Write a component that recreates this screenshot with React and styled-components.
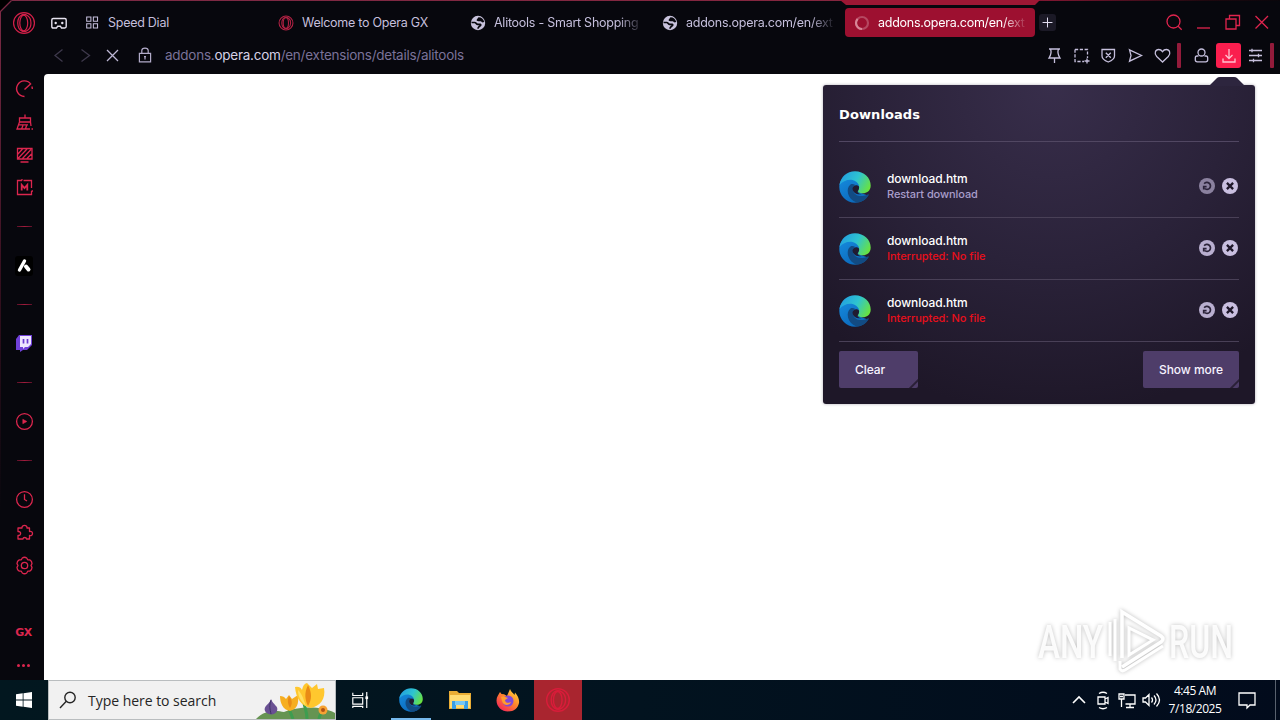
import React from "react";
import styled, { createGlobalStyle } from "styled-components";

const Global = createGlobalStyle`
  *, *::before, *::after { box-sizing: border-box; }
  body { margin: 0; overflow: hidden; background: #fff; }
  button { font: inherit; border: 0; padding: 0; background: none; color: inherit; }
  svg { display: block; flex: none; }
`;

const Desktop = styled.div`
  display: flex;
  flex-direction: column;
  width: 1280px;
  height: 720px;
  font-family: Inter, "Liberation Sans", sans-serif;
`;

const Browser = styled.div`
  position: relative;
  display: flex;
  flex-direction: column;
  height: 680px;
  background: #07070d;
  color: #c5bfdc;
`;

const WindowEdge = styled.svg`
  position: absolute;
  top: 0;
  left: 0;
  pointer-events: none;
`;

const TabBar = styled.div`
  display: flex;
  align-items: center;
  height: 45px;
  padding: 0 8px 0 12px;
`;

const MainMenu = styled.div`
  display: flex;
  align-items: center;
  gap: 15px;
  width: 65px;
`;

const Tab = styled.div`
  display: flex;
  align-items: center;
  gap: 8px;
  width: 192px;
  height: 29px;
  padding: 0 9px;
  color: #c5bfdc;
  ${(p) => p.$active && `
    width: 190px;
    padding-right: 7px;
    background: #9d1030;
    border-radius: 4px;
    color: #fff;
  `}
`;

const TabTitle = styled.span`
  flex: 1;
  overflow: hidden;
  white-space: nowrap;
  font-size: 12.5px;
  line-height: 20px;
  letter-spacing: -.26px;
  ${(p) => p.$fade && `mask-image: linear-gradient(90deg, #000 calc(100% - 26px), transparent);`}
`;

const NewTab = styled.button`
  display: grid;
  place-items: center;
  width: 17px;
  height: 17px;
  margin-left: 4px;
  border-radius: 3px;
  background: #1b1926;
  color: #e4dff3;
`;

const WindowControls = styled.div`
  display: flex;
  align-items: center;
  gap: 9px;
  margin-left: auto;
  padding-bottom: 1px;
  color: #e0244e;
`;

const AddressRow = styled.div`
  display: flex;
  align-items: center;
  height: 29px;
  padding: 0 6px 8px 48px;
`;

const NavGroup = styled.div`
  display: flex;
  gap: 7px;
  padding-bottom: 1px;
  color: #bdb7d4;
`;

const Address = styled.div`
  display: flex;
  align-items: center;
  gap: 12px;
  margin-left: 15px;
  padding-bottom: 2px;
  font-size: 13.5px;
  line-height: 20px;
  letter-spacing: -.25px;
  color: #7a7299;
  b { font-weight: 400; color: #d6d1e6; }
`;

const Tools = styled.div`
  display: flex;
  align-items: center;
  gap: 7px;
  margin-left: auto;
  > svg { margin-bottom: 1px; }
`;

const ToolDivider = styled.i`
  width: 4px;
  height: 25px;
  border-radius: 1px;
  background: #931b3b;
  margin: 0 ${(p) => (p.$last ? "0" : "3px")} 0 -2px;
`;

const DownloadButton = styled.button`
  display: grid;
  place-items: center;
  width: 25px;
  height: 25px;
  margin: 0 -3px 0 -2px;
  border-radius: 3px;
  background: #fa1e4e;
  color: #ffc1cf;
`;

const Content = styled.div`
  display: flex;
  flex: 1;
`;

const Sidebar = styled.nav`
  display: flex;
  flex-direction: column;
  width: 44px;
  padding-left: 4px;
  color: #dc264e;
`;

const SideItem = styled.div`
  display: grid;
  place-items: center;
  height: ${(p) => p.$h}px;
  margin-top: ${(p) => p.$gap || 0}px;
`;

const SideRule = styled.i`
  width: 15px;
  height: 1px;
  background: linear-gradient(90deg, #5d1028, #a01c3c 50%, #5d1028);
`;

const GxLabel = styled.b`
  font: bold 11px "DejaVu Sans", sans-serif;
  letter-spacing: -0.4px;
  padding-right: 1px;
`;

const Page = styled.main`
  position: relative;
  flex: 1;
  background: #fff;
  border-top-left-radius: 4px;
`;

const Popup = styled.section`
  position: absolute;
  top: 11px;
  right: 25px;
  width: 432px;
  height: 319px;
  padding: 0 16px;
  border-radius: 3px;
  background: radial-gradient(ellipse 330px 330px at 53% 0, #382e4b 0, #2a2239 55%, #1e1728 100%);
  box-shadow: 0 0 3px rgba(20, 10, 40, .35);
`;

const PopupNotch = styled.svg`
  position: absolute;
  top: -8px;
  right: 9px;
`;

const PopupTitle = styled.h2`
  height: 57px;
  margin: 0 0 14px;
  border-bottom: 1px solid #514762;
  color: #fff;
  font: bold 13px/59px "DejaVu Sans", sans-serif;
  letter-spacing: 0.1px;
`;

const DownloadRow = styled.div`
  display: flex;
  align-items: center;
  height: 62px;
  border-bottom: 1px solid #494057;
`;

const FileText = styled.div`
  flex: 1;
  margin: -1px 0 0 16px;
`;

const FileName = styled.div`
  color: #fff;
  font-size: 12px;
  font-weight: 500;
  line-height: 16px;
  letter-spacing: -.1px;
`;

const FileStatus = styled.div`
  color: ${(p) => (p.$failed ? "#e80f1b" : "#a99ecb")};
  font-size: 11px;
  font-weight: 500;
  line-height: 15px;
  letter-spacing: ${(p) => (p.$failed ? "-.03px" : "-.08px")};
`;

const RowActions = styled.div`
  display: flex;
  gap: 7px;
  margin: -1px 1px 0 0;
`;

const PopupFooter = styled.div`
  display: flex;
  justify-content: space-between;
  margin-top: 9px;
`;

const PopupButton = styled.button`
  width: ${(p) => p.$w}px;
  height: 37px;
  padding: 0 16px;
  border-radius: 2px;
  background: linear-gradient(135deg, transparent calc(100% - 7px), #2a2037 calc(100% - 6px), #2a2037 calc(100% - 5px), transparent calc(100% - 4px)), #4e3d69;
  color: #f6f3ff;
  font-size: 12px;
  font-weight: 500;
  text-align: left;
  white-space: nowrap;
  letter-spacing: -.05px;
`;

const Watermark = styled.svg`
  position: absolute;
  right: 36px;
  bottom: 2px;
  overflow: visible;
  filter: drop-shadow(0 0 2px rgba(0, 0, 0, .27));
`;

const Taskbar = styled.footer`
  display: flex;
  height: 40px;
  background: linear-gradient(90deg, #02171f, #02131f 50%, #020b1c);
  color: #fff;
  font-family: "Open Sans", "Noto Sans", sans-serif;
`;

const TaskButton = styled.div`
  display: grid;
  place-items: center;
  width: ${(p) => p.$w || 49}px;
  height: 40px;
  background: ${(p) => p.$bg || "transparent"};
  box-shadow: ${(p) => (p.$running ? "inset 0 -2px #76b9ed" : "none")};
  margin: 0 ${(p) => p.$space || 0}px;
`;

const SearchBox = styled.div`
  display: flex;
  align-items: center;
  width: 288px;
  border: 1px solid #b9bdbf;
  background: #f1f1f1;
  color: #252525;
  padding-left: 10px;
  font-size: 14px;
  svg:last-child { margin-left: auto; }
  span { margin-left: 11px; white-space: nowrap; letter-spacing: -.03px; }
`;

const Tray = styled.div`
  display: flex;
  align-items: center;
  margin-left: auto;
  padding-right: 4px;
  gap: 4px;
`;

const Clock = styled.div`
  width: 60px;
  margin-right: -1px;
  text-align: center;
  font-size: 12px;
  line-height: 18px;
  letter-spacing: -.45px;
  white-space: nowrap;
`;

const Notifications = styled.div`
  display: flex;
  align-items: center;
  width: 48px;
  height: 40px;
  padding-left: 9px;
  border-right: 1px solid #59616e;
`;

const Icon = ({ size = 20, w = 1.3, children, ...rest }) => (
  <svg width={size} height={size} viewBox="0 0 20 20" fill="none" stroke="currentColor" strokeWidth={w} {...rest}>
    {children}
  </svg>
);

const OperaIcon = ({ size, w = 1.2, color = "#d32049" }) => (
  <Icon size={size} w={w} stroke={color}>
    <circle cx="10" cy="10" r="8.700" />
    <ellipse cx="9.800" cy="10" rx="3.300" ry="6.600" />
    <path d="M7.500 3.800C10.500 1.500 15.800 4 15.800 10S10.500 18.500 7.500 16.200M9.500 3.200C3.200 3 3.200 17 9.500 16.800" />
  </Icon>
);

const GlobeIcon = () => (
  <svg width="16" height="16" viewBox="0 0 16 16">
    <circle cx="8" cy="8" r="7.200" fill="#c8c2dc" />
    <path d="M1.500 7.500h3.200c1.300 0 1.600 1.800 3 1.800h2.500c1 .4.5 1.500-.5 1.800-1 .2-.9 1.800-2.200 2.400" fill="none" stroke="#07070d" strokeWidth="1.700" />
    <path d="M8.500 2.200L6.800 4.600c-.7 1.300.5 1.700 1.700 1.700h2.200c1 .1.900 1.300 2.300 1.300l1.200-.8C13.500 4 11.500 2.300 8.500 2.200z" fill="#07070d" />
  </svg>
);

const EdgeIcon = ({ size, id }) => (
  <svg width={size} height={size} viewBox="0 0 32 32">
    <defs>
      <linearGradient id={`${id}-sky`} x1="0" y1=".3" x2="1" y2=".7">
        <stop stopColor="#239fe0" /><stop offset=".5" stopColor="#2ec4d0" /><stop offset="1" stopColor="#6be33b" />
      </linearGradient>
      <linearGradient id={`${id}-sea`} x1="0" y1="0" x2=".7" y2="1">
        <stop stopColor="#168de0" /><stop offset="1" stopColor="#0b66b8" />
      </linearGradient>
    </defs>
    <path d="M.3 16C.3 7 8 3 16 5l6 10-3 6 10 3.500C26.500 29 22 31.700 16 31.700 7.300 31.700.3 24.700.3 16z" fill={`url(#${id}-sea)`} />
    <path d="M.5 14C1.500 6 8 .3 16 .3c9 0 15.700 6.500 15.700 14.200 0 5.500-4.300 7.800-7.700 7.800-3.800 0-6-1.600-4.800-3.300 2.400-3.200.2-8.700-5.700-10C8.500 8.200 3.500 10.300.5 14z" fill={`url(#${id}-sky)`} />
    <path d="M11.500 13.500C6.500 17 8 28 17.500 31.500c5.200 0 9.500-2.700 12.200-7.200.4-.8-.2-1.300-1-.9-6.300 3.300-13 1.500-14.500-3.500-.7-2.600.2-4.800 2-5.800-1.500-1.200-3.300-1.300-4.700-.6z" fill="#124b83" />
    <path d="M20 15.500c-2.500-2.700-6-1-6.500 2 .2 4.500 5 6.500 9 5.500-3-.3-4.700-1.500-3.400-3.300.8-1 1.200-2.700.9-4.200z" fill="#201b31" />
  </svg>
);

const RetryIcon = ({ faded }) => (
  <svg width="16" height="16" viewBox="0 0 16 16" opacity={faded ? 0.68 : 1}>
    <circle cx="8" cy="8" r="8" fill="#b9afd0" />
    <path d="M5.200 5.800A3.500 3.500 0 1 1 5.600 10.500M4.700 11.500V8.700H7.600" fill="none" stroke="#2b2339" strokeWidth="1.700" />
  </svg>
);

const RemoveIcon = () => (
  <svg width="16" height="16" viewBox="0 0 16 16">
    <circle cx="8" cy="8" r="8" fill="#c9bfe0" />
    <path d="M4.900 4.900l6.200 6.200m0-6.200l-6.200 6.200" stroke="#1f182a" strokeWidth="2.300" />
  </svg>
);

const BrowserFrame = () => (
  <WindowEdge width="1280" height="680" viewBox="0 0 1280 680">
    <defs>
      <linearGradient id="frame-top"><stop stopColor="#7b2a45" /><stop offset=".65" stopColor="#85263f" /><stop offset=".82" stopColor="#7d1630" /><stop offset=".94" stopColor="#20080f" /><stop offset="1" stopColor="#0a060b" /></linearGradient>
      <linearGradient id="frame-left" x1="0" y1="0" x2="0" y2="1"><stop stopColor="#7b2a45" /><stop offset=".4" stopColor="#36101f" /><stop offset=".75" stopColor="#07070d" /></linearGradient>
    </defs>
    <path d="M0 0h12L0 12z" fill="#000" />
    <path d="M12 0h1268v1H11z" fill="url(#frame-top)" />
    <path d="M0 11h1v669H0z" fill="url(#frame-left)" />
    <path d="M.5 11.500l11-11" stroke="#7b2a45" strokeWidth="1.300" />
    <path d="M840 0h200l-5 5H846z" fill="#9d1734" />
  </WindowEdge>
);

const tabs = [
  { title: "Welcome to Opera GX", icon: <OperaIcon size={16} w={1.300} color="#b52245" /> },
  { title: "Alitools - Smart Shopping", icon: <GlobeIcon />, fade: true },
  { title: "addons.opera.com/en/ext", icon: <GlobeIcon />, fade: true },
];

const Spinner = () => (
  <Icon size={16} w={2.700}>
    <circle cx="10" cy="10" r="7.500" stroke="#b54861" />
    <path d="M10 17.500A7.500 7.500 0 0 1 4.500 5" stroke="#d98597" />
  </Icon>
);

const Header = () => (
  <>
    <TabBar>
      <MainMenu>
        <OperaIcon size={24} w={1} />
        <svg width="16" height="14" viewBox="0 0 16 14" fill="none" stroke="#e6e2ef" strokeWidth="1.400">
          <path d="M2.200 2.500h11.600q1.400 0 1.400 1.400v6.700q0 1.400-1.400 1.400H10.500L9.300 10.200H6.700L5.500 12H2.200Q.8 12 .8 10.600V3.900Q.8 2.500 2.200 2.500z" />
          <circle cx="4.700" cy="7" r="1.200" fill="#e6e2ef" stroke="none" /><circle cx="11.300" cy="7" r="1.200" fill="#e6e2ef" stroke="none" />
        </svg>
      </MainMenu>
      <Tab>
        <Icon size={14} w={1.500}><path d="M1 1.500h6v6H1zM10.500 1.500h6v6h-6zM1 11h6v6H1zM10.500 11h6v6h-6z" /></Icon>
        <TabTitle>Speed Dial</TabTitle>
      </Tab>
      {tabs.map((t, i) => (
        <Tab key={i}>{t.icon}<TabTitle $fade={t.fade}>{t.title}</TabTitle></Tab>
      ))}
      <Tab $active><Spinner /><TabTitle $fade>addons.opera.com/en/ext</TabTitle></Tab>
      <NewTab><Icon size={11} w={1.800}><path d="M10 1v18M1 10h18" /></Icon></NewTab>
      <WindowControls>
        <Icon><circle cx="8.500" cy="9.500" r="6.500" /><path d="M13.200 14.200l3.500 3.500" /></Icon>
        <Icon><path d="M3 16h13" /></Icon>
        <Icon><path d="M3 7h10v10H3zM6.500 6.500V3.500H16.500v10H13.500" /></Icon>
        <Icon><path d="M3.500 4l12.500 12.500M16 4L3.500 16.500" /></Icon>
      </WindowControls>
    </TabBar>
    <AddressRow>
      <NavGroup>
        <Icon stroke="#3e394c"><path d="M14.500 4.500L7 10.500l7.500 6" /></Icon>
        <Icon stroke="#3e394c"><path d="M6.500 4.500l8 6-8 6" /></Icon>
        <Icon><path d="M5 5l11 11M16 5L5 16" /></Icon>
      </NavGroup>
      <Address>
        <Icon size={16} w={1.500}>
          <g stroke="#b2abc9"><path d="M3 8h14v10.500H3zM6 8V4.500q0-3 4-3t4 3V8M10 12v3.500" /><path d="M8.800 12h2.400" /></g>
        </Icon>
        <span>addons.<b>opera.com</b>/en/extensions/details/alitools</span>
      </Address>
      <Tools>
        <Icon><path d="M5 4h11M6.500 4q1.700 4-1.500 9h11q-3.200-5-1.500-9M10.500 13v5" /></Icon>
        <Icon><path d="M4 4.500H16.500V13M4 4.500V16.500H13" strokeDasharray="3.200 1.600" /><path d="M13.500 16h5m-2.500-2.500v5" /></Icon>
        <Icon><path d="M4 4.500h12.500V11q0 3.500-6.250 6Q4 14.500 4 11zM7.800 7.800l5 5m0-5l-5 5" /></Icon>
        <Icon><path d="M4.500 4.800L16.500 10.500 4.500 16.200 6 10.500z" /></Icon>
        <Icon><path d="M10.500 17L4.700 11.500C1.700 8.500 3.500 4.500 6.700 4.500c2 0 3 1 3.800 2.200.8-1.200 1.800-2.200 3.800-2.200 3.200 0 5 4 2 7z" /></Icon>
        <ToolDivider />
        <Icon><circle cx="10.500" cy="7.500" r="3.500" /><path d="M7.500 11H6q-1.700 0-1.700 2v2q0 1.800 2 1.800h8.400q2 0 2-1.800v-2q0-2-1.700-2h-1.500" /></Icon>
        <DownloadButton><Icon><path d="M10 3v9M6.500 9L10 12.500 13.500 9M4 12.500V16h12v-3.500" /></Icon></DownloadButton>
        <Icon><path d="M4 5.500h13M4 10.500h13M4 15.500h13M7 3.800v3.400M13.500 8.800v3.400M8.500 13.800v3.400" /></Icon>
        <ToolDivider $last />
      </Tools>
    </AddressRow>
  </>
);

const SideNav = () => (
  <Sidebar>
    <SideItem $h={29}><Icon w={1.400}><path d="M10.500 17.500A7.800 7.800 0 1 1 17 5.500M10.500 10.500l6-5.500M17.800 7.500q.6 1.500.5 2.500" /></Icon></SideItem>
    <SideItem $h={37}><Icon><path d="M5.500 10l-2.500 7h13M5.500 10h11V6h-11zM16.500 10l.5 4M11 6V2.500M9 13.500L7.500 17M12.500 13.500l-1 3.500M5 12.800h9M17.500 17H19" /></Icon></SideItem>
    <SideItem $h={30}><Icon><path d="M3.500 3.500H18V14H3.500zM6.500 17h8M4 9l4.500-5M4 13.500L13 4M8.500 13.500l8.500-9M13 13.500l4.500-4.500" /></Icon></SideItem>
    <SideItem $h={34}><Icon><path d="M8 3.500H3.500v14h14V14M9.500 3.500h8V11M8 3.500V2M17.500 14H19" /><path d="M7.700 13.500V8l2.800 3.200L13.300 8v5.500" strokeWidth="1.800" /></Icon></SideItem>
    <SideItem $h={44}><SideRule /></SideItem>
    <SideItem $h={36}>
      <svg width="18" height="20" viewBox="0 0 18 20"><rect width="18" height="20" rx="3" fill="#000" /><path d="M9.500 5L4.500 14" stroke="#fff" strokeWidth="3.400" strokeLinecap="round" /><path d="M11 10.500l2.500 3" stroke="#fff" strokeWidth="4" strokeLinecap="round" /></svg>
    </SideItem>
    <SideItem $h={40}><SideRule /></SideItem>
    <SideItem $h={38}>
      <svg width="16" height="17" viewBox="0 0 16 17"><path d="M3 0h13v10l-5 5H7l-3 2v-2H0V4z" fill="#7040d8" /><path d="M4 1h11v8l-3 3H9l-2 2v-2H4z" fill="#eee6ff" /><path d="M7.500 4v4.500M11.500 4v4.500" stroke="#6a3bd0" strokeWidth="1.700" /></svg>
    </SideItem>
    <SideItem $h={40}><SideRule /></SideItem>
    <SideItem $h={38}><Icon><circle cx="10.500" cy="10.500" r="7.900" /><path d="M8.800 8.300l4 2.200-4 2.200z" fill="currentColor" strokeWidth=".6" /></Icon></SideItem>
    <SideItem $h={40}><SideRule /></SideItem>
    <SideItem $h={38}><Icon><circle cx="10.500" cy="10.500" r="7.900" /><path d="M10.500 5.300v5.200l2.500 1.500" /></Icon></SideItem>
    <SideItem $h={29}><Icon><path d="M4 5h4c-.3-3.500 5.300-3.500 5 0h2.500v3.500c4-1 4 5 0 4V16h-3c0-2-3.500-2-3.500 0H4v-3.500c3.500.3 3.500-4.300 0-4z" strokeLinejoin="round" /></Icon></SideItem>
    <SideItem $h={36}><Icon><g transform="translate(.5 .5)"><circle cx="10" cy="10" r="3.200" /><path d="M7.800 2.500q2.200-1.500 4.400 0l1 1.800 2.100.1q2.200 1.200 2.200 3.700l-1 1.900 1 1.900q0 2.500-2.200 3.700l-2.100.1-1 1.800q-2.200 1.500-4.400 0l-1-1.800-2.100-.1q-2.200-1.200-2.200-3.700l1-1.900-1-1.900q0-2.500 2.200-3.700l2.100-.1z" strokeLinejoin="round" /></g></Icon></SideItem>
    <SideItem $h={33} $gap={33}><GxLabel>GX</GxLabel></SideItem>
    <SideItem $h={31}><Icon fill="currentColor" stroke="none"><circle cx="4.500" cy="10.500" r="1.500" /><circle cx="9.500" cy="10.500" r="1.500" /><circle cx="14.500" cy="10.500" r="1.500" /></Icon></SideItem>
  </Sidebar>
);

const downloads = [
  { status: "Restart download", failed: false },
  { status: "Interrupted: No file", failed: true },
  { status: "Interrupted: No file", failed: true },
];

const DownloadsPopup = () => (
  <Popup>
    <PopupNotch width="37" height="9" viewBox="0 0 37 9"><path d="M0 9l8-8q1-1 3-1h14q2 0 3 1l7 7 2 1z" fill="#2d253e" /></PopupNotch>
    <PopupTitle>Downloads</PopupTitle>
    {downloads.map((d, i) => (
      <DownloadRow key={i}>
        <EdgeIcon size={32} id={`file${i}`} />
        <FileText><FileName>download.htm</FileName><FileStatus $failed={d.failed}>{d.status}</FileStatus></FileText>
        <RowActions><RetryIcon faded={!d.failed} /><RemoveIcon /></RowActions>
      </DownloadRow>
    ))}
    <PopupFooter><PopupButton $w={79}>Clear</PopupButton><PopupButton $w={96}>Show more</PopupButton></PopupFooter>
  </Popup>
);

const AnyRun = () => (
  <Watermark width="206" height="70" viewBox="0 0 206 70">
    <g fill="#fff" fillOpacity=".9" fontFamily="Roboto, sans-serif" fontSize="47" fontWeight="500">
      <text x="0" y="50" textLength="65" lengthAdjust="spacingAndGlyphs">ANY</text>
      <text x="131" y="50" textLength="64" lengthAdjust="spacingAndGlyphs">RUN</text>
    </g>
    <g fill="none" stroke="#fff" strokeWidth="3.500">
      <path d="M84 50V4L123 28q4 3 0 6L84 59" />
      <path d="M72 14v34M77 11v42M82 53v8q2 3 5 1l38-24M91 20v27l24-15z" strokeWidth="3" />
    </g>
  </Watermark>
);

const Flowers = () => (
  <svg width="80" height="38" viewBox="0 0 80 38">
    <path d="M1 38c8-9 20-9 28-7 13-5 36-7 51 1v6z" fill="#669452" />
    <path d="M38 38l-5-13M52 38c0-8-2-10-3-16M64 38c0-4 3-6 4-9" stroke="#3e9d50" strokeWidth="3" fill="none" />
    <path d="M16 18c2 6 8 7 6 12-2 5-10 4-12 0-2-5 5-7 6-12z" fill="#695093" />
    <path d="M16 19c-2 6-1 9 0 14" stroke="#3e3267" fill="none" />
    <path d="M25 15q4 0 6 3l3-4 3 4 6-4c1 9-1 14-8 16-7-1-10-8-10-15z" fill="#f6ae20" />
    <path d="M40 6q5-1 7 3 1-6 5-7l5 5 5-4 1 5 6-1c2 11-4 18-13 20C46 25 41 17 40 6z" fill="#ffc72e" />
    <path d="M53 4c-4 8-3 15 0 21 4-7 4-13 0-21M34 15c-2 5-1 8 1 12 3-5 2-8-1-12" fill="#e98b16" />
    <path d="M43 9c0 8 4 12 8 16-3-7-3-11-8-16" fill="#ffe063" />
    <circle cx="68" cy="29" r="4.500" fill="#f6a233" /><circle cx="68" cy="29" r="2" fill="#b05215" />
  </svg>
);

const WindowsTaskbar = () => (
  <Taskbar>
    <TaskButton $w={48}><svg width="16" height="16" viewBox="0 0 16 16" fill="#fff"><path d="M0 2.300L6.700 1.300V7.600H0zM7.500 1.200L16 0v7.600H7.500zM0 8.400h6.700v6.300L0 13.700zM7.500 8.400H16V16l-8.500-1.200z" /></svg></TaskButton>
    <SearchBox>
      <svg width="18" height="18" viewBox="0 0 18 18" fill="none" stroke="#252525" strokeWidth="1.400"><circle cx="11" cy="6.500" r="5.200" /><path d="M7.300 10.300L1 17" /></svg>
      <span>Type here to search</span>
      <Flowers />
    </SearchBox>
    <TaskButton $w={48}><Icon size={18}><path d="M2 2v3h11V2M2 7.500h11v7H2zM2 19v-2h11v2M17.500 1v18" /><path d="M16 6h3v3h-3z" fill="#fff" stroke="none" /></Icon></TaskButton>
    <TaskButton $w={40} $space={7} $running><EdgeIcon size={24} id="taskbar" /></TaskButton>
    <TaskButton $w={44}>
      <svg width="22" height="20" viewBox="0 0 22 20"><path d="M0 1h8l2 2h12v16H0z" fill="#e9ad35" /><path d="M1 5h20v13H1z" fill="#ffdb72" /><path d="M3 11h16v8h-4v-4H7v4H3z" fill="#3a9ee5" /><path d="M6 11h10v4H6z" fill="#75c7f5" /></svg>
    </TaskButton>
    <TaskButton $w={52}>
      <svg width="24" height="24" viewBox="0 0 24 24">
        <defs><linearGradient id="fox" x1="1" y1="0" x2=".2" y2="1"><stop stopColor="#ffe63b" /><stop offset=".5" stopColor="#ff862c" /><stop offset="1" stopColor="#f2205b" /></linearGradient></defs>
        <path d="M4 4l1.500 2 2.500.2L11 8l3-7c1 3 3.500 4 4.500 6l.5-2.500c3 3.500 4.500 7 4 10.500-1 5-5 8.500-11 8.500S.5 19 .5 12.500C.5 9 2.500 7 4 4z" fill="url(#fox)" />
        <circle cx="12" cy="13" r="5.500" fill="#8048d8" /><path d="M5 9c3-1 4 0 7 1l-3 2c0 3 4 3.500 6 2-1 4-8 4-9-1z" fill="#ff9d2c" />
      </svg>
    </TaskButton>
    <TaskButton $w={48} $bg="#a9252f"><OperaIcon size={26} w={1.100} color="#d91c3a" /></TaskButton>
    <Tray>
      <Icon w={1.600}><path d="M4 13l6-6 6 6" /></Icon>
      <Icon><path d="M5 7h7v7H5zM12 9l3-1.500v6L12 12M6 3.500q4-2.500 8 0M6 17.500q4 2.500 8 0" /></Icon>
      <Icon><path d="M8 5h10v9H8.500M13 14v3M9 17.500h8M2 4h5v5H2zM4.500 9v8M3 6.500h3" /></Icon>
      <Icon><path d="M2 8h2.500L8 4.500v11L4.500 12H2zM10.500 7.500q2 2.500 0 5M13 5.500q4 4.500 0 9M15.500 3.500q6 6.500 0 13" /></Icon>
      <Clock>4:45 AM<br />7/18/2025</Clock>
      <Notifications><Icon><path d="M2 3h16v12h-5l-3 3v-3H2z" /></Icon></Notifications>
    </Tray>
  </Taskbar>
);

export default function App() {
  return (
    <Desktop>
      <Global />
      <Browser>
        <BrowserFrame />
        <Header />
        <Content><SideNav /><Page><DownloadsPopup /><AnyRun /></Page></Content>
      </Browser>
      <WindowsTaskbar />
    </Desktop>
  );
}
